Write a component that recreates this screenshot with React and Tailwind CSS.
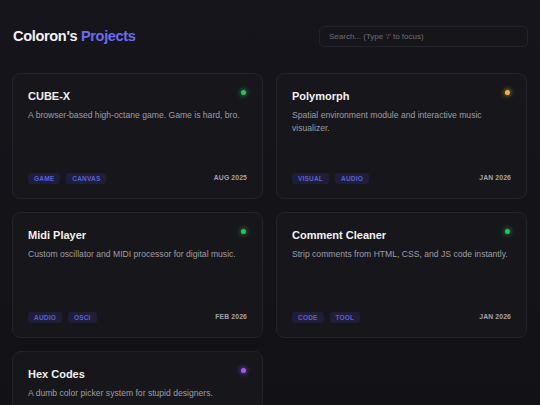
import React from 'react';

const projects = [
  { title: 'CUBE-X', desc: 'A browser-based high-octane game. Game is hard, bro.', tags: ['GAME', 'CANVAS'], date: 'AUG 2025', dot: 'bg-[#22c55e] shadow-[0_0_5px_#22c55e]' },
  { title: 'Polymorph', desc: 'Spatial environment module and interactive music visualizer.', tags: ['VISUAL', 'AUDIO'], date: 'JAN 2026', dot: 'bg-[#f5b53a] shadow-[0_0_5px_#f5b53a]' },
  { title: 'Midi Player', desc: 'Custom oscillator and MIDI processor for digital music.', tags: ['AUDIO', 'OSCI'], date: 'FEB 2026', dot: 'bg-[#22c55e] shadow-[0_0_5px_#22c55e]' },
  { title: 'Comment Cleaner', desc: 'Strip comments from HTML, CSS, and JS code instantly.', tags: ['CODE', 'TOOL'], date: 'JAN 2026', dot: 'bg-[#22c55e] shadow-[0_0_5px_#22c55e]' },
  { title: 'Hex Codes', desc: 'A dumb color picker system for stupid designers.', tags: ['COLOR', 'TOOL'], date: 'DEC 2025', dot: 'bg-[#a855f7] shadow-[0_0_5px_#a855f7]' },
];

function Card({ p }) {
  return (
    <div className="relative flex flex-col h-[126px] rounded-[8px] border border-[#222227] bg-[#17171b] px-[15px] pt-[15px] pb-[14px]">
      <div className={`absolute top-[16px] right-[16px] w-[5px] h-[5px] rounded-full ${p.dot}`} />
      <h2 className="text-[11px] leading-[14px] font-bold text-[#f1f1f3]">{p.title}</h2>
      <p className="mt-[6px] text-[8.6px] leading-[13px] text-[#9d9da4]">{p.desc}</p>
      <div className="mt-auto flex items-center justify-between">
        <div className="flex gap-[6px]">
          {p.tags.map(t => (
            <span key={t} className="h-[11px] px-[6px] flex items-center rounded-[3px] bg-[#1e1e38] text-[6.5px] font-bold tracking-[0.03em] text-[#5c60d4]">{t}</span>
          ))}
        </div>
        <span className="text-[6.8px] font-bold text-[#a3a3ab] tracking-[0.02em]">{p.date}</span>
      </div>
    </div>
  );
}

export default function App() {
  return (
    <div className="min-h-[405px] bg-gradient-to-b from-[#16151c] to-[#111114] px-[12px] pt-[26px] pb-[20px]" style={{ fontFamily: '"Liberation Sans", Arial, sans-serif' }}>
      <header className="flex items-center justify-between h-[21px]">
        <h1 className="ml-[1px] text-[14.6px] font-bold tracking-tight text-[#f2f2f4]">
          Coloron's <span className="text-[#6b6cee]">Projects</span>
        </h1>
        <div className="w-[209px] h-[21px] rounded-[5px] border border-[#222228] bg-[#16161a] flex items-center px-[9px]">
          <span className="text-[8px] text-[#6d6d75]">Search... (Type '/' to focus)</span>
        </div>
      </header>
      <main className="mt-[26px] grid grid-cols-[251px_251px] gap-x-[13px]">
        {projects.map((p, i) => <div key={p.title} className={i > 1 ? 'mt-[13px]' : ''}><Card p={p} /></div>)}
      </main>
    </div>
  );
}
